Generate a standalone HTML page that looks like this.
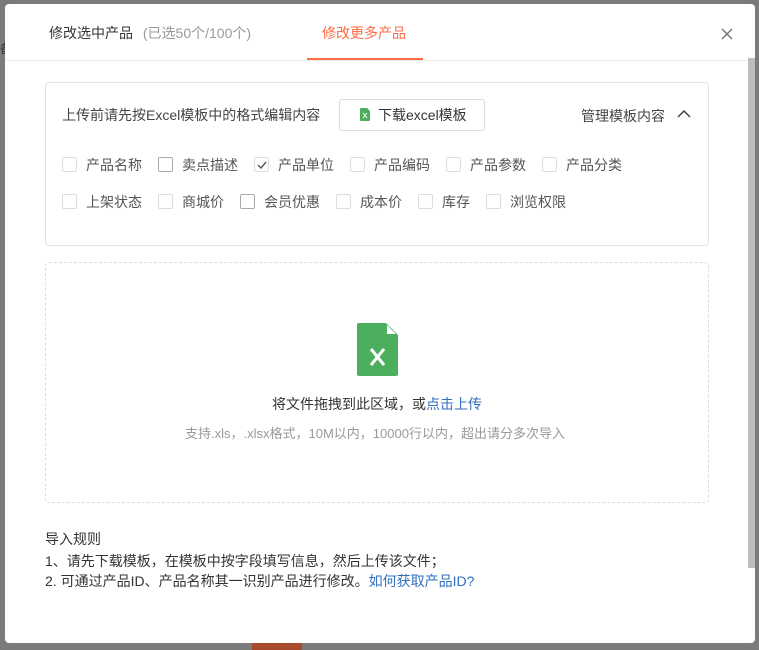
<!DOCTYPE html>
<html><head><meta charset="utf-8"><style>
*{margin:0;padding:0;box-sizing:border-box}
body{width:759px;height:650px;background:#7b7b7b;font-family:"Liberation Sans","Noto Sans CJK SC",sans-serif;font-size:14px;color:#333;position:relative;overflow:hidden}
.modal{position:absolute;left:5px;top:4px;width:750px;height:639px;background:#fff;border-radius:4px;overflow:hidden}
.abs{position:absolute;white-space:nowrap}
.cb{position:absolute;width:15px;height:15px;border:1px solid #ddd;border-radius:2px;background:#fff}
.cb.d{border-color:#aaa}
.lbl{position:absolute;color:#555;font-size:14px;line-height:16px}
</style></head><body>
<div class="abs" style="left:0;top:40px;color:#333;font-size:12px">备</div>
<div class="modal">
 <div class="abs" style="left:44px;top:19px;font-size:14px;color:#333">修改选中产品 <span style="color:#999;font-size:14px;margin-left:6px">(已选50个/100个)</span></div>
 <div class="abs" style="left:317px;top:19px;font-size:14px;color:#ff6b45">修改更多产品</div>
 <div class="abs" style="left:302px;top:54px;width:116px;height:2px;background:#ff6b45"></div>
 <div class="abs" style="left:0;top:56px;width:750px;height:1px;background:#e8e8e8"></div>
 <svg class="abs" style="left:716px;top:24px" width="12" height="12"><path d="M1 1L11 11M11 1L1 11" stroke="#777" stroke-width="1.5"/></svg>
 <div class="abs" style="left:743px;top:54px;width:7px;height:510px;background:#bcbcbc"></div>

 <div class="abs" style="left:40px;top:78px;width:664px;height:164px;border:1px solid #e2e2e2;border-radius:4px"></div>
 <div class="abs" style="left:57px;top:101px;color:#444">上传前请先按Excel模板中的格式编辑内容</div>
 <div class="abs" style="left:334px;top:95px;width:146px;height:32px;border:1px solid #ddd;border-radius:3px"></div>
 <svg class="abs" style="left:355px;top:104px" width="10" height="13"><path d="M0 1Q0 0 1 0H7L10 3V12Q10 13 9 13H1Q0 13 0 12Z" fill="#4caf5e"/><path d="M3 5L7 10M7 5L3 10" stroke="#fff" stroke-width="1"/></svg>
 <div class="abs" style="left:373px;top:101px;color:#333">下载excel模板</div>
 <div class="abs" style="left:576px;top:102px;color:#444">管理模板内容</div>
 <svg class="abs" style="left:672px;top:105px" width="14" height="9"><path d="M1 8L7 2L13 8" stroke="#444" stroke-width="1.5" fill="none"/></svg>

 <div class="cb" style="left:57px;top:153px"></div><div class="lbl" style="left:81px;top:153px">产品名称</div>
 <div class="cb d" style="left:153px;top:153px"></div><div class="lbl" style="left:177px;top:153px">卖点描述</div>
 <div class="cb" style="left:249px;top:153px"></div><svg class="abs" style="left:252px;top:157px" width="10" height="8"><path d="M1 4L4 7L9 1" stroke="#555" stroke-width="1.4" fill="none"/></svg><div class="lbl" style="left:273px;top:153px">产品单位</div>
 <div class="cb" style="left:345px;top:153px"></div><div class="lbl" style="left:369px;top:153px">产品编码</div>
 <div class="cb" style="left:441px;top:153px"></div><div class="lbl" style="left:465px;top:153px">产品参数</div>
 <div class="cb" style="left:537px;top:153px"></div><div class="lbl" style="left:561px;top:153px">产品分类</div>

 <div class="cb" style="left:57px;top:190px"></div><div class="lbl" style="left:81px;top:190px">上架状态</div>
 <div class="cb" style="left:153px;top:190px"></div><div class="lbl" style="left:177px;top:190px">商城价</div>
 <div class="cb d" style="left:235px;top:190px"></div><div class="lbl" style="left:259px;top:190px">会员优惠</div>
 <div class="cb" style="left:331px;top:190px"></div><div class="lbl" style="left:355px;top:190px">成本价</div>
 <div class="cb" style="left:413px;top:190px"></div><div class="lbl" style="left:437px;top:190px">库存</div>
 <div class="cb" style="left:481px;top:190px"></div><div class="lbl" style="left:505px;top:190px">浏览权限</div>

 <div class="abs" style="left:40px;top:258px;width:664px;height:241px;border:1px dashed #ddd;border-radius:4px"></div>
 <svg class="abs" style="left:352px;top:319px" width="41" height="53"><path d="M0 2Q0 0 2 0H29L41 12V51Q41 53 39 53H2Q0 53 0 51Z" fill="#4caf5e"/><path d="M30 2L39 11H30Z" fill="#fff"/><path d="M14 26L27 42M27 26L14 42" stroke="#fff" stroke-width="3"/></svg>
 <div class="abs" style="left:267px;top:390px;color:#333">将文件拖拽到此区域，或<span style="color:#2f6fbf">点击上传</span></div>
 <div class="abs" style="left:180px;top:419px;color:#999;font-size:13px">支持.xls，.xlsx格式，10M以内，10000行以内，超出请分多次导入</div>

 <div class="abs" style="left:40px;top:525px;color:#333">导入规则</div>
 <div class="abs" style="left:40px;top:547px;color:#333">1、请先下载模板，在模板中按字段填写信息，然后上传该文件；</div>
 <div class="abs" style="left:40px;top:567px;color:#333">2. 可通过产品ID、产品名称其一识别产品进行修改。<span style="color:#2f6fbf">如何获取产品ID?</span></div>
</div>
<div class="abs" style="left:252px;top:643px;width:50px;height:7px;background:#a84a2e"></div>
</body></html>
